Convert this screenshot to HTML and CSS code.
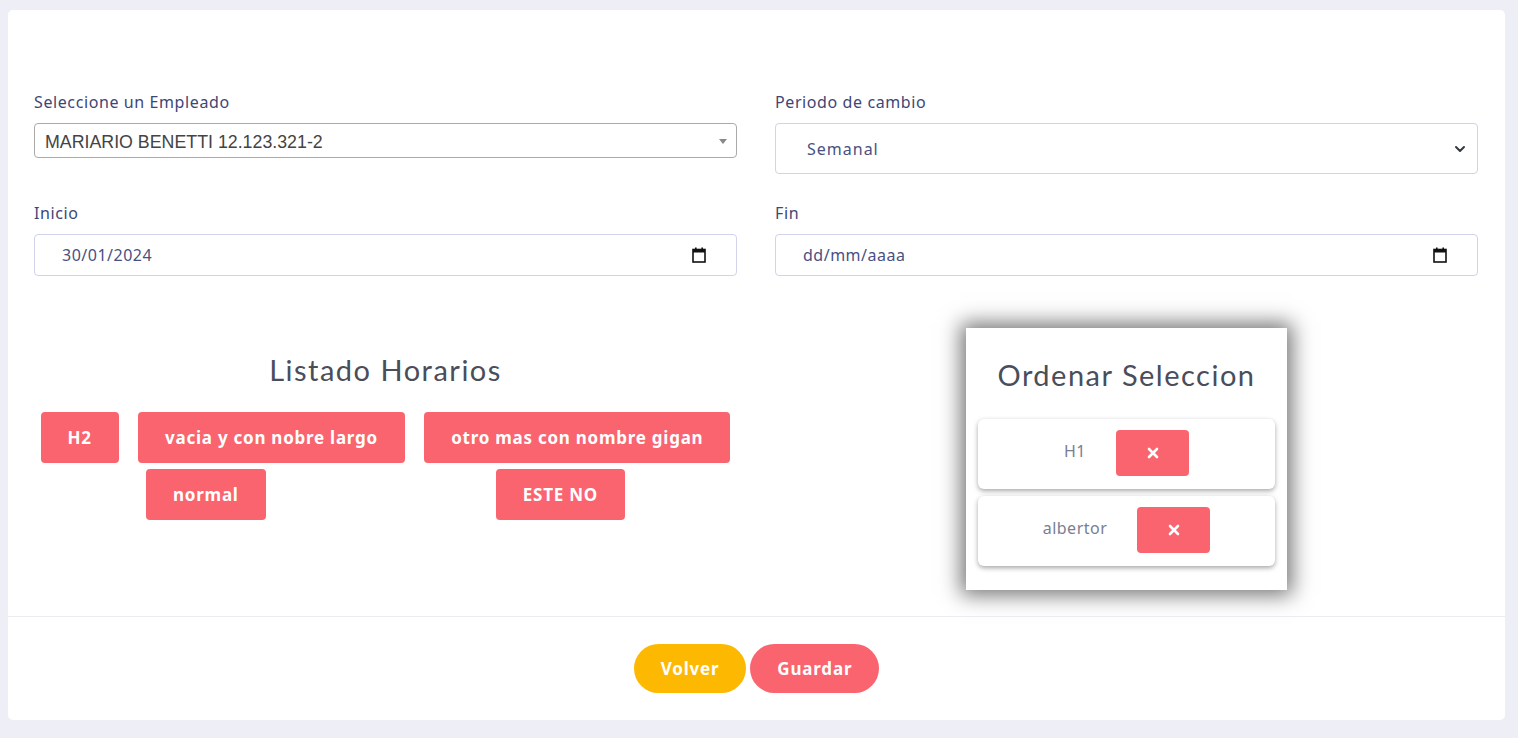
FILE: index.html
```html
<!DOCTYPE html>
<html lang="es">
<head>
<meta charset="utf-8">
<title>Cambio de horario</title>
<link rel="stylesheet" href="styles.css">
</head>
<body>
<div class="card">
  <div class="card-body">
    <div class="form-grid">
      <div class="field">
        <label class="label">Seleccione un Empleado</label>
        <div class="select2">
          <span class="select2-text">MARIARIO BENETTI 12.123.321-2</span>
          <span class="select2-arrow"></span>
        </div>
      </div>
      <div class="field">
        <label class="label">Periodo de cambio</label>
        <div class="control control-select">
          <span class="control-text">Semanal</span>
          <svg class="chevron" width="12" height="8" viewBox="0 0 12 8"><path d="M2 2 L6 6 L10 2" fill="none" stroke="#343a40" stroke-width="2" stroke-linecap="round" stroke-linejoin="round"/></svg>
        </div>
      </div>
      <div class="field">
        <label class="label">Inicio</label>
        <div class="control control-date">
          <span class="control-text">30/01/2024</span>
          <svg class="cal" width="14" height="16" viewBox="0 0 14 16"><rect x="1" y="2.5" width="12" height="12.5" fill="none" stroke="#111" stroke-width="1.6"/><rect x="1" y="2.5" width="12" height="3" fill="#111"/><rect x="3" y="0.5" width="1.6" height="3" fill="#111"/><rect x="9.4" y="0.5" width="1.6" height="3" fill="#111"/></svg>
        </div>
      </div>
      <div class="field">
        <label class="label">Fin</label>
        <div class="control control-date">
          <span class="control-text">dd/mm/aaaa</span>
          <svg class="cal" width="14" height="16" viewBox="0 0 14 16"><rect x="1" y="2.5" width="12" height="12.5" fill="none" stroke="#111" stroke-width="1.6"/><rect x="1" y="2.5" width="12" height="3" fill="#111"/><rect x="3" y="0.5" width="1.6" height="3" fill="#111"/><rect x="9.4" y="0.5" width="1.6" height="3" fill="#111"/></svg>
        </div>
      </div>
    </div>

    <div class="lower-grid">
      <div class="listado">
        <h3 class="title title-left">Listado Horarios</h3>
        <div class="chips">
          <button class="chip">H2</button>
          <button class="chip">vacia y con nobre largo</button>
          <button class="chip">otro mas con nombre gigan</button>
          <button class="chip">normal</button>
          <button class="chip">ESTE NO</button>
        </div>
      </div>
      <div class="orden-wrap">
        <div class="orden">
          <h3 class="title title-orden">Ordenar Seleccion</h3>
          <div class="orden-item">
            <span class="orden-name">H1</span>
            <button class="remove">
              <svg width="12" height="12" viewBox="0 0 12 12"><path d="M2 2 L10 10 M10 2 L2 10" stroke="#fff" stroke-width="2.6" stroke-linecap="round"/></svg>
            </button>
          </div>
          <div class="orden-item">
            <span class="orden-name">albertor</span>
            <button class="remove">
              <svg width="12" height="12" viewBox="0 0 12 12"><path d="M2 2 L10 10 M10 2 L2 10" stroke="#fff" stroke-width="2.6" stroke-linecap="round"/></svg>
            </button>
          </div>
        </div>
      </div>
    </div>
  </div>
  <div class="card-footer">
    <button class="pill pill-warning">Volver</button>
    <button class="pill pill-danger">Guardar</button>
  </div>
</div>
</body>
</html>
```
FILE: styles.css
```css
* { box-sizing: border-box; }

body {
  margin: 0;
  background: #eeeff6;
  font-family: "Noto Sans", "Open Sans", sans-serif;
  font-size: 16px;
  color: #3e4676;
}

.card {
  margin: 10px 13px 18px 8px;
  background: #fff;
  border-radius: 5px;
  height: 710px;
  display: flex;
  flex-direction: column;
}

.card-body {
  padding: 80px 27px 0 26px;
  flex: 1;
}

.form-grid {
  display: grid;
  grid-template-columns: 703px 703px;
  column-gap: 38px;
  row-gap: 27px;
}

.field {
  display: flex;
  flex-direction: column;
  align-items: stretch;
}

.label {
  display: block;
  line-height: 24px;
  margin-bottom: 9px;
  color: #3e4676;
  letter-spacing: 0.6px;
}

.select2 {
  height: 35px;
  border: 1px solid #aaa;
  border-radius: 4px;
  display: flex;
  align-items: center;
  padding: 3px 10px 0 10px;
  position: relative;
}

.select2-text {
  font-family: "Liberation Sans", Arial, sans-serif;
  color: #444;
  font-size: 17.8px;
}

.select2-arrow {
  position: absolute;
  right: 9px;
  top: 15px;
  width: 0;
  height: 0;
  border-left: 4px solid transparent;
  border-right: 4px solid transparent;
  border-top: 5px solid #888;
}

.control {
  border: 1px solid #d0d3ea;
  border-radius: 4px;
  display: flex;
  align-items: center;
  justify-content: space-between;
  color: #495082;
}

.control-select {
  height: 51px;
  padding: 0 11px 0 31px;
}

.control-select .control-text {
  letter-spacing: 1px;
}

.control-date {
  height: 42px;
  padding: 0 30px 0 27px;
}

.control-date .control-text {
  letter-spacing: 0.5px;
}

.control-text {
  line-height: 24px;
}

.chevron { display: block; }
.cal { display: block; }

.lower-grid {
  display: grid;
  grid-template-columns: 703px 703px;
  column-gap: 38px;
  margin-top: 52px;
}

.title {
  margin: 0;
  font-family: "Lato", sans-serif;
  font-weight: 400;
  font-size: 29px;
  color: #4a4d5a;
  text-align: center;
  letter-spacing: 1.5px;
}

.title-left {
  margin-top: 24px;
  line-height: 36px;
}

.chips {
  margin: 24px -3px 0 -3px;
  display: flex;
  flex-wrap: wrap;
  justify-content: space-around;
  row-gap: 6px;
}

.chip {
  height: 51px;
  padding: 0 27px;
  border: none;
  border-radius: 4px;
  background: #f9646f;
  color: #fff;
  font-family: "Noto Sans", sans-serif;
  font-weight: 700;
  font-size: 17px;
  letter-spacing: 0.75px;
}

.orden-wrap {
  display: flex;
  justify-content: center;
}

.orden {
  width: 321px;
  background: #fff;
  box-shadow: 0 0 20px 5px rgba(0, 0, 0, 0.55);
  padding: 29px 12px 24px 12px;
  display: flex;
  flex-direction: column;
  gap: 7px;
}

.title-orden {
  line-height: 36px;
  margin-bottom: 19px;
}

.orden-item {
  height: 70px;
  border-radius: 6px;
  background: #fff;
  box-shadow: 0 2px 5px rgba(0, 0, 0, 0.35);
  display: flex;
  align-items: center;
  justify-content: center;
  gap: 30px;
}

.orden-name {
  color: #7a7e92;
  font-size: 16px;
  letter-spacing: 0.5px;
  margin-bottom: 6px;
}

.remove {
  width: 73px;
  height: 46px;
  border: none;
  border-radius: 4px;
  background: #f9646f;
  display: flex;
  align-items: center;
  justify-content: center;
  margin-bottom: 2px;
}

.card-footer {
  border-top: 1px solid #ebecef;
  height: 104px;
  display: flex;
  justify-content: center;
  align-items: center;
  gap: 4px;
}

.pill {
  height: 49px;
  border: none;
  border-radius: 25px;
  padding: 0 27px;
  color: #fff;
  font-family: "Noto Sans", sans-serif;
  font-weight: 700;
  font-size: 17px;
  letter-spacing: 0.8px;
}

.pill-warning { background: #fdb902; }
.pill-danger { background: #f9646f; }
```
